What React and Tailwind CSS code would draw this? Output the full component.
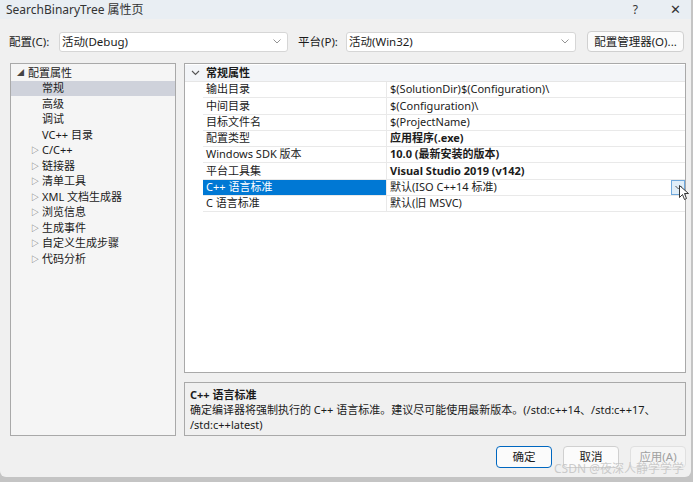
import { useState } from "react";

/* ================= DATA ================= */

const treeItems = [
  { label: "常规", indent: true, selected: true },
  { label: "高级", indent: true },
  { label: "调试", indent: true },
  { label: "VC++ 目录", indent: true },
  { label: "C/C++", arrow: true },
  { label: "链接器", arrow: true },
  { label: "清单工具", arrow: true },
  { label: "XML 文档生成器", arrow: true },
  { label: "浏览信息", arrow: true },
  { label: "生成事件", arrow: true },
  { label: "自定义生成步骤", arrow: true },
  { label: "代码分析", arrow: true },
];

const props = [
  { name: "输出目录", value: "$(SolutionDir)$(Configuration)\\" },
  { name: "中间目录", value: "$(Configuration)\\" },
  { name: "目标文件名", value: "$(ProjectName)" },
  { name: "配置类型", value: "应用程序(.exe)", bold: true },
  { name: "Windows SDK 版本", value: "10.0 (最新安装的版本)", bold: true },
  { name: "平台工具集", value: "Visual Studio 2019 (v142)", bold: true },
  { name: "C++ 语言标准", value: "默认(ISO C++14 标准)", selected: true },
  { name: "C 语言标准", value: "默认(旧 MSVC)" },
];

export default function App() {

  const [selected, setSelected] =
    useState("C++ 语言标准");

  return (

    <div
      className="w-[693px] h-[482px] bg-[#c4c4c4] overflow-hidden text-[11px] text-[#1b1b1b]"
      style={{ fontFamily: '"Noto Sans", "Noto Sans CJK SC", sans-serif' }}
    >

      <div className="w-[691px] h-[477px] bg-[#f0f0f0] rounded-b-[6px] flex flex-col">

        {/* ================= TITLE ================= */}

        <div className="h-[19px] bg-[#e9eef3] flex items-center justify-between pl-[6px] pr-[10px] leading-none">

          <span className="text-[12px] text-[#333]">
            SearchBinaryTree 属性页
          </span>

          <div className="flex items-center gap-[32px] text-[#333]">
            <span className="text-[12px]">?</span>
            <span className="text-[13px]">✕</span>
          </div>

        </div>

        {/* ================= CONFIG ROW ================= */}

        <div className="flex items-center mt-[12px] pl-[9px] h-[21px] text-[11.5px]">

          <span className="w-[50px]">配置(C):</span>

          <Select value="活动(Debug)" width="w-[229px]" />

          <span className="ml-[10px] w-[48px]">平台(P):</span>

          <Select value="活动(Win32)" width="w-[230px]" />

          <button className="ml-[11px] w-[97px] h-[21px] bg-[#fbfbfb] border border-[#d0d0d0] rounded-[4px]">
            配置管理器(O)...
          </button>

        </div>

        {/* ================= MAIN ================= */}

        <div className="flex mt-[11px] pl-[10px] gap-[8px] h-[373px]">

          {/* TREE */}

          <div className="w-[166px] h-full bg-[#f5f5f5] border border-[#a9a9a9] pt-[1px]">

            <div className="h-[15.5px] flex items-center">
              <span className="w-[17px] pl-[6px] text-[7px] text-[#444]">◢</span>
              <span>配置属性</span>
            </div>

            {treeItems.map((t) => (

              <div
                key={t.label}
                className={`h-[15.5px] flex items-center ${
                  t.selected ? "bg-[#cfd2db]" : ""
                }`}
              >
                <span className="w-[31px] pl-[20px] text-[8px] text-[#555]">
                  {t.arrow ? "▷" : ""}
                </span>
                <span>{t.label}</span>
              </div>
            ))}

          </div>

          {/* RIGHT */}

          <div className="w-[502px] flex flex-col">

            {/* GRID */}

            <div className="h-[310px] bg-white border border-[#a9a9a9] pt-[1px] relative">

              <div className="h-[17px] flex items-center bg-[#f3f5f8] border-b border-[#e6e6e6]">
                <span className="w-[21px] pl-[6px] text-[#555]">
                  <svg width="9" height="6" viewBox="0 0 9 6">
                    <path d="M1 1l3.5 3.5L8 1" fill="none" stroke="#555" strokeWidth="1.1" />
                  </svg>
                </span>
                <span className="font-bold">常规属性</span>
              </div>

              {props.map((p) => {

                const isSel = selected === p.name;

                return (

                  <div
                    key={p.name}
                    onClick={() => setSelected(p.name)}
                    className="h-[16.25px] flex pl-[18px]"
                  >
                    <div
                      className={`w-[184px] flex items-center pl-[3px] border-b border-r border-[#e9e9e9] ${
                        isSel ? "bg-[#0078d4] text-white" : ""
                      }`}
                    >
                      {p.name}
                    </div>

                    <div
                      className={`flex-1 flex items-center pl-[3px] border-b border-[#e9e9e9] ${
                        p.bold ? "font-bold" : ""
                      }`}
                    >
                      {p.value}
                    </div>
                  </div>
                );
              })}

              {/* DROPDOWN BUTTON */}

              <div className="absolute left-[486px] top-[116px] w-[14px] h-[15px] bg-[#e0eef9] border border-[#6fa8dc] flex items-center justify-center">
                <svg width="7" height="5" viewBox="0 0 7 5">
                  <path d="M0.5 1l3 3 3-3" fill="none" stroke="#555" strokeWidth="1" />
                </svg>
              </div>

              {/* CURSOR */}

              <svg
                className="absolute left-[494px] top-[121px]"
                width="10"
                height="16"
                viewBox="0 0 10 16"
              >
                <path
                  d="M0.5 0.5v12l3-3 2 5 2-1-2-5h4z"
                  fill="white"
                  stroke="#222"
                  strokeWidth="0.9"
                />
              </svg>

            </div>

            {/* DESCRIPTION */}

            <div className="mt-[9px] h-[54px] bg-[#f0f0f0] border border-[#a9a9a9] px-[5px] pt-[4px] leading-[15px]">

              <p className="font-bold">
                C++ 语言标准
              </p>

              <p className="whitespace-nowrap">
                确定编译器将强制执行的 C++ 语言标准。建议尽可能使用最新版本。(/std:c++14、/std:c++17、
              </p>

              <p>
                /std:c++latest)
              </p>

            </div>

          </div>

        </div>

        {/* ================= BUTTONS ================= */}

        <div className="flex justify-end gap-[11px] mt-[10px] pr-[5px] relative text-[11.5px]">

          <button className="w-[56px] h-[22px] bg-[#fbfbfb] border border-[#0067c0] rounded-[4px]">
            确定
          </button>

          <button className="w-[56px] h-[22px] bg-[#fbfbfb] border border-[#d0d0d0] rounded-[4px]">
            取消
          </button>

          <button className="w-[56px] h-[22px] bg-[#f5f5f5] border border-[#e0e0e0] rounded-[4px] text-[#a0a0a0]">
            应用(A)
          </button>

          <span className="absolute right-[7px] top-[14px] text-[12px] text-[#c0c0c0]/80">
            CSDN @夜深人静学学学
          </span>

        </div>

      </div>

    </div>
  );
}

/* ================= SELECT ================= */

function Select({ value, width }) {

  return (

    <div className={`${width} h-[20px] bg-white border border-[#d6d6d6] rounded-[3px] flex items-center justify-between pl-[2px] pr-[6px]`}>

      <span>{value}</span>

      <svg width="8" height="5" viewBox="0 0 8 5">
        <path d="M0.5 0.5l3.5 3.5 3.5-3.5" fill="none" stroke="#888" strokeWidth="0.9" />
      </svg>

    </div>
  );
}
